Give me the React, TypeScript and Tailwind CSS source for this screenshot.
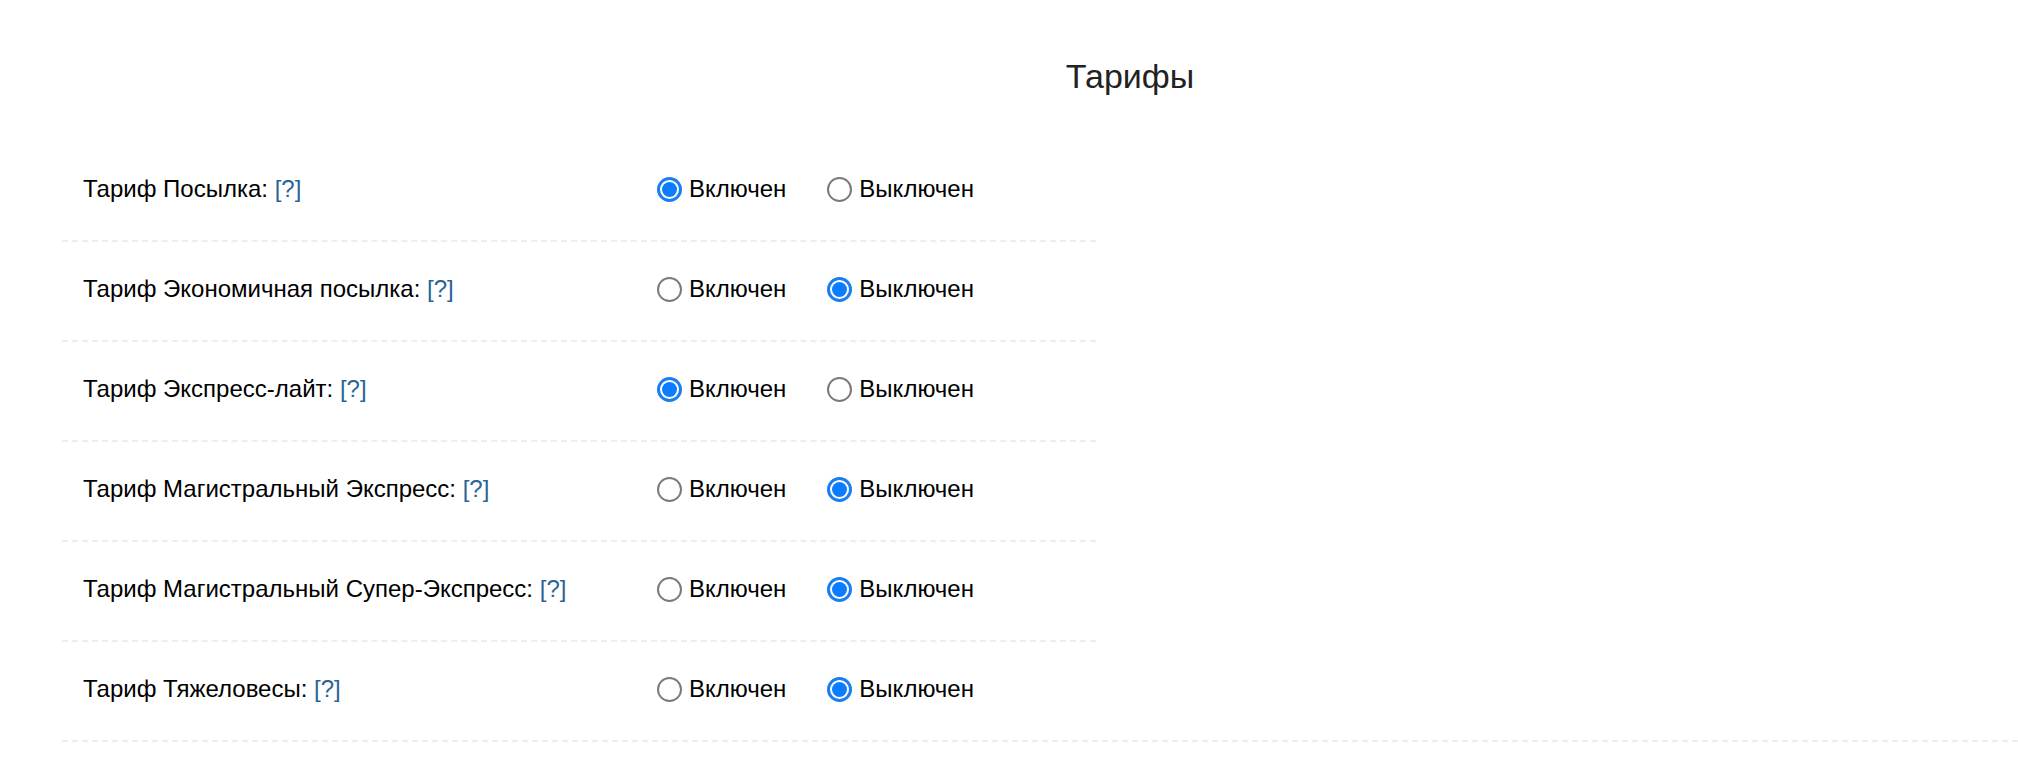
import React from 'react'

type Tariff = {
  name: string
  enabled: boolean
}

const tariffs: Tariff[] = [
  { name: 'Тариф Посылка:', enabled: true },
  { name: 'Тариф Экономичная посылка:', enabled: false },
  { name: 'Тариф Экспресс-лайт:', enabled: true },
  { name: 'Тариф Магистральный Экспресс:', enabled: false },
  { name: 'Тариф Магистральный Супер-Экспресс:', enabled: false },
  { name: 'Тариф Тяжеловесы:', enabled: false },
]

function Radio({ checked, label }: { checked: boolean; label: string }) {
  return (
    <label className="flex items-center gap-[7px] cursor-pointer">
      {checked ? (
        <span className="flex items-center justify-center w-[25px] h-[25px] rounded-full border-[3px] border-[#1a7df0]">
          <span className="w-[15px] h-[15px] rounded-full bg-[#0b7bff]" />
        </span>
      ) : (
        <span className="w-[25px] h-[25px] rounded-full border-2 border-[#7a7a7a] bg-white" />
      )}
      <span>{label}</span>
    </label>
  )
}

export default function App() {
  return (
    <div
      className="w-full overflow-hidden bg-white text-black"
      style={{ fontFamily: '"Liberation Sans", Arial, sans-serif' }}
    >
      <div className="ml-[62px] w-[2136px] pt-[57px] pb-[38px]">
        {/* заголовок */}
        <h1 className="text-center text-[34px] leading-[38px] text-[#222222] font-normal">
          Тарифы
        </h1>

        {/* список тарифов */}
        <div className="mt-[47px]">
          {tariffs.map((t, i) => (
            <div
              key={t.name}
              className={
                i === tariffs.length - 1
                  ? 'w-full border-b-2 border-dashed border-[#eeeeee]'
                  : 'w-[1034px] border-b-2 border-dashed border-[#eeeeee]'
              }
            >
              <div className="flex items-center pt-[33px] pb-[37px] text-[24px] leading-[28px]">
                <div className="w-[595px] pl-[21px]">
                  {t.name}{' '}
                  <a href="#" className="text-[#2a6496]">
                    [?]
                  </a>
                </div>
                <div className="flex items-center gap-[41px]">
                  <Radio checked={t.enabled} label="Включен" />
                  <Radio checked={!t.enabled} label="Выключен" />
                </div>
              </div>
            </div>
          ))}
        </div>
      </div>
    </div>
  )
}
